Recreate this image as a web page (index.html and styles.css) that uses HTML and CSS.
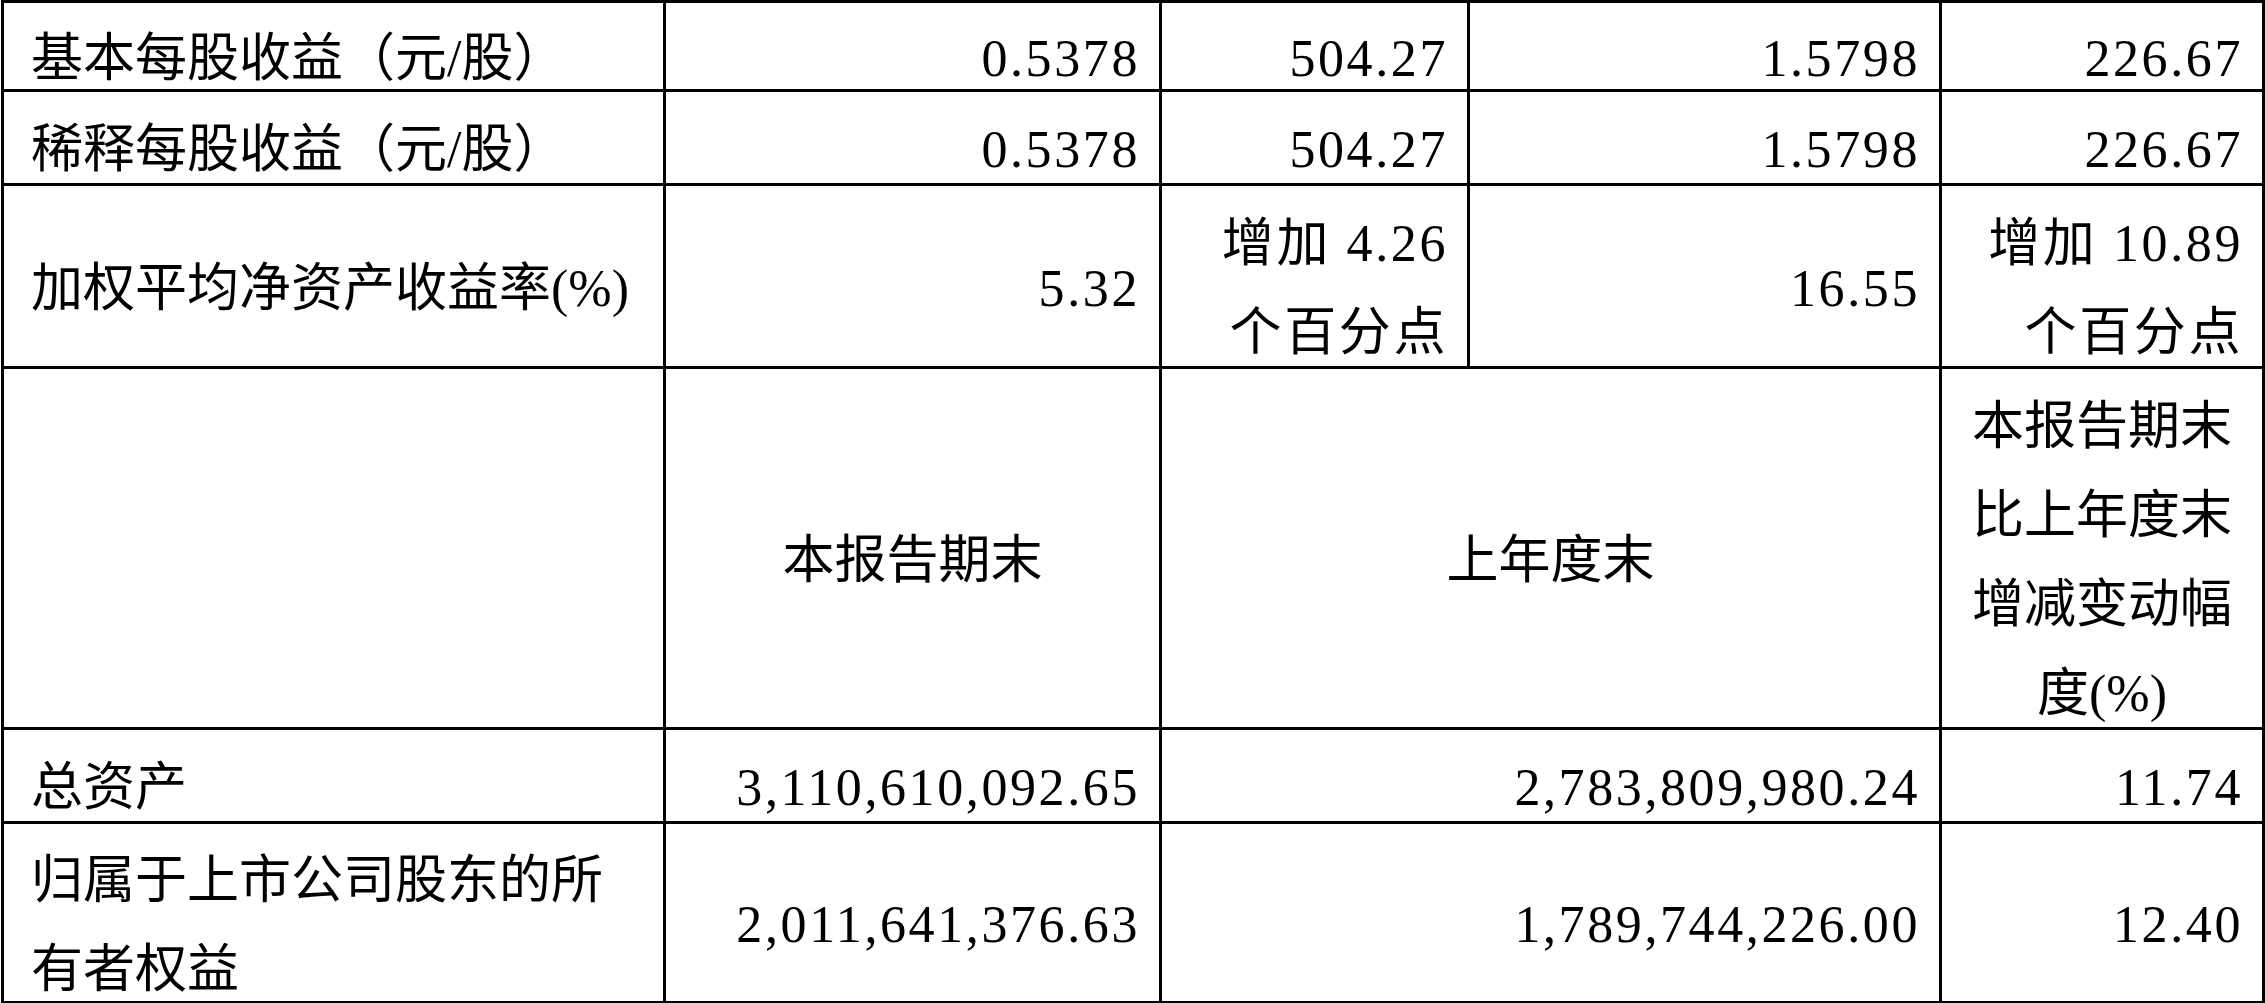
FILE: index.html
```html
<!DOCTYPE html>
<html lang="zh-CN">
<head>
<meta charset="utf-8">
<title>主要会计数据和财务指标</title>
<link rel="stylesheet" href="styles.css">
</head>
<body>
<div class="sheet">
  <div class="cell label">基本每股收益（元/股）</div>
  <div class="cell num">0.5378</div>
  <div class="cell num">504.27</div>
  <div class="cell num">1.5798</div>
  <div class="cell num">226.67</div>

  <div class="cell label">稀释每股收益（元/股）</div>
  <div class="cell num">0.5378</div>
  <div class="cell num">504.27</div>
  <div class="cell num">1.5798</div>
  <div class="cell num">226.67</div>

  <div class="cell label">加权平均净资产收益率(%)</div>
  <div class="cell num">5.32</div>
  <div class="cell num">增加 4.26<br>个百分点</div>
  <div class="cell num">16.55</div>
  <div class="cell num">增加 10.89<br>个百分点</div>

  <div class="cell label"></div>
  <div class="cell head">本报告期末</div>
  <div class="cell head span2">上年度末</div>
  <div class="cell head">本报告期末比上年度末增减变动幅度(%)</div>

  <div class="cell label">总资产</div>
  <div class="cell num">3,110,610,092.65</div>
  <div class="cell num span2">2,783,809,980.24</div>
  <div class="cell num">11.74</div>

  <div class="cell label">归属于上市公司股东的所有者权益</div>
  <div class="cell num">2,011,641,376.63</div>
  <div class="cell num span2">1,789,744,226.00</div>
  <div class="cell num">12.40</div>
</div>
</body>
</html>
```

FILE: styles.css
```css
html, body {
  margin: 0;
  padding: 0;
  background: #fff;
  overflow: hidden;
}

.sheet {
  display: grid;
  grid-template-columns: 659px 493px 305px 469px 320px;
  grid-template-rows: 86px 91px 180px 358px 91px 177px;
  gap: 3px;
  padding: 3px 3px 2px 3px;
  margin-left: 1px;
  width: max-content;
  background: #000;
  font-family: "Liberation Serif", "Noto Sans CJK SC", serif;
  font-size: 52px;
  line-height: 89px;
  color: #000;
}

.cell {
  background: #fff;
  display: flex;
  align-items: center;
  box-sizing: border-box;
  padding-top: 24px;
  min-width: 0;
  min-height: 0;
}

.label {
  padding-left: 27px;
  padding-right: 24px;
}

.num {
  justify-content: flex-end;
  text-align: right;
  padding-right: 19px;
  letter-spacing: 2.6px;
}

.head {
  justify-content: center;
  text-align: center;
  padding-left: 20px;
  padding-right: 20px;
}

.span2 {
  grid-column: span 2;
}
```
